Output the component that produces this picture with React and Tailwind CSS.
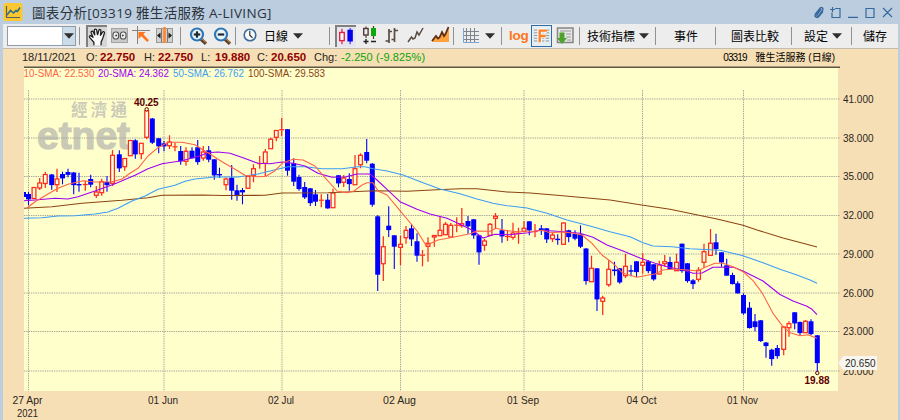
import React from "react";

const UP = true;
const DOWN = false;

// [x, high, bodyTop, bodyBottom, low, direction]
const CANDLES = [
  [28.5, 192, 194, 199, 205, DOWN],
  [34, 187, 187.5, 198.5, 199, UP],
  [39.7, 178, 183, 188, 190, UP],
  [45.3, 172, 174.5, 183.5, 188, UP],
  [51.7, 174, 174.5, 184.7, 189.7, DOWN],
  [57, 168.7, 179, 184.7, 192, UP],
  [62.5, 171.7, 174, 178, 184.3, DOWN],
  [68, 168.7, 172, 174.5, 177.3, DOWN],
  [73.7, 172, 172.5, 184.7, 194.3, DOWN],
  [79, 172.7, 184, 185, 191.7, DOWN],
  [85.3, 180.7, 184, 185, 190.7, UP],
  [90.7, 174.7, 179, 184.3, 187.3, DOWN],
  [96.3, 186, 192, 195.3, 198, UP],
  [101.7, 178.7, 181.7, 192.7, 195.7, UP],
  [107, 176, 182, 184.7, 191.7, DOWN],
  [112.5, 150, 155.3, 183.3, 186, UP],
  [119.3, 150.3, 154.3, 168, 172, DOWN],
  [124.7, 158.3, 158.5, 166.7, 170.7, UP],
  [130.3, 140, 140.5, 155.7, 156, UP],
  [135.3, 139.3, 140.3, 154, 158.7, DOWN],
  [141.3, 143, 143.3, 153.7, 159.3, UP],
  [146.7, 108.7, 110.7, 137.3, 139.3, UP],
  [152.3, 118, 118.5, 142.3, 144, DOWN],
  [158.7, 138, 138.3, 146, 153.3, DOWN],
  [164, 141, 143.3, 146, 151.3, DOWN],
  [169.5, 135.3, 142, 145.7, 149, UP],
  [175, 142.7, 146.3, 147.3, 151.3, UP],
  [180.7, 146, 151, 161, 164.7, DOWN],
  [186, 147.3, 151.3, 161.3, 165.7, UP],
  [192, 147.3, 150.7, 158, 158.3, DOWN],
  [197.7, 140, 147.3, 161.7, 164.7, DOWN],
  [203.3, 146, 152, 158, 160.7, UP],
  [208.7, 146, 150.3, 159.3, 162.3, DOWN],
  [214.3, 159, 159.3, 175, 179.7, DOWN],
  [219.5, 167.7, 174, 175, 178, DOWN],
  [226, 177.7, 179, 184.7, 190.3, UP],
  [231.7, 165, 177.7, 190.3, 199.7, DOWN],
  [237, 184.7, 190.3, 195.7, 200.7, DOWN],
  [242.5, 188, 190, 192, 204.3, DOWN],
  [248, 175.3, 176.3, 188.3, 188.5, UP],
  [253.5, 164.3, 168.7, 175.3, 182.3, UP],
  [259.7, 156, 163, 164, 168.7, UP],
  [265.3, 149, 152, 163.3, 176.3, UP],
  [270.7, 137.7, 139.3, 148.7, 149, UP],
  [276.3, 130, 130.5, 137.3, 141.3, UP],
  [281.7, 118, 129.2, 130.2, 136, UP],
  [287.5, 129, 129.2, 170.3, 175.7, DOWN],
  [293.7, 158.3, 163.3, 181.3, 186, DOWN],
  [299, 174.7, 177, 188.7, 190.7, DOWN],
  [304.7, 182, 187, 197, 199, DOWN],
  [310.3, 188, 188.3, 202.7, 206, DOWN],
  [315.5, 190, 194.3, 201.3, 206, DOWN],
  [321.3, 194.3, 199.7, 200.7, 207.3, UP],
  [327.7, 194, 199.7, 208, 208.7, DOWN],
  [333, 188.7, 193, 207.7, 208, UP],
  [338.5, 175, 175.3, 183, 187.3, DOWN],
  [343.7, 175, 178, 182.3, 187, UP],
  [349.3, 173.3, 179, 183.7, 190.7, DOWN],
  [355, 155, 168.7, 184.7, 185, UP],
  [360.5, 153.3, 155.3, 164.7, 168.3, UP],
  [366.7, 139, 152, 160.3, 163.3, DOWN],
  [372.3, 163, 163.7, 204.3, 206.7, DOWN],
  [377.7, 215.3, 216.3, 274.3, 291, DOWN],
  [383.3, 236.3, 246.7, 263.7, 281, UP],
  [388.7, 206.3, 225.7, 229.7, 237, DOWN],
  [394.3, 235, 235.3, 246.3, 269, DOWN],
  [400.5, 235.7, 244.3, 247.3, 265.3, UP],
  [406, 226, 230.3, 237.7, 243.7, UP],
  [411.5, 224, 228.3, 239, 246, DOWN],
  [417, 233.3, 241.3, 255.3, 261.7, DOWN],
  [422.5, 250, 254.7, 255.7, 266.3, UP],
  [428, 237.3, 243.3, 246.3, 261.7, UP],
  [434.3, 235, 235.5, 237, 246.7, UP],
  [440, 216.7, 230.3, 235.7, 236, UP],
  [445.5, 222, 224.3, 234.7, 235, UP],
  [450.7, 223, 225.3, 237, 237.3, UP],
  [456.7, 217.3, 224.7, 225.7, 232.3, UP],
  [461.8, 208, 223.7, 225.7, 227.7, UP],
  [468, 216, 221, 226, 233.7, DOWN],
  [473.7, 219, 219.3, 235, 238.7, DOWN],
  [479, 235, 235.3, 252, 264.7, DOWN],
  [484.5, 238.7, 241, 245.3, 250.7, UP],
  [490, 223, 224.3, 235.3, 235.5, UP],
  [495.5, 213, 216.3, 218.3, 229, UP],
  [502, 219, 230.3, 236, 242.7, DOWN],
  [507.5, 230, 236, 236.8, 241, UP],
  [513, 222.7, 233, 237.3, 239.7, UP],
  [518.5, 227.7, 232.7, 233.7, 243.7, UP],
  [524, 221, 228.3, 231.3, 232, UP],
  [529.3, 221, 221.3, 230, 235.3, DOWN],
  [535, 224, 231, 232, 237.3, UP],
  [541.3, 225, 228.3, 230.7, 235, DOWN],
  [546.7, 228, 228.3, 239, 243, DOWN],
  [552.5, 233, 235, 238.7, 242, UP],
  [557.7, 234.3, 238.7, 239.7, 244.7, DOWN],
  [563.5, 222.5, 223, 244.3, 244.5, UP],
  [568.7, 229.7, 230.3, 236.7, 242.3, DOWN],
  [575, 230.3, 234, 238.3, 240.3, DOWN],
  [580.5, 225.3, 234, 246.3, 248, DOWN],
  [586, 248, 248.5, 280.7, 284.7, DOWN],
  [591.5, 255.7, 268.3, 281.7, 282, UP],
  [597, 268, 268.3, 299, 311, DOWN],
  [602.7, 295.7, 298, 301.3, 315, UP],
  [608.7, 260.3, 269.3, 284.7, 286.7, UP],
  [614.5, 261.7, 269.5, 270.7, 275.7, DOWN],
  [619.7, 268, 268.3, 282, 283.7, DOWN],
  [625.5, 254, 266.3, 275.7, 278, UP],
  [631, 265, 270.2, 271.3, 276.3, DOWN],
  [636.5, 261, 261.3, 271.7, 277, DOWN],
  [642.7, 253.3, 262.3, 265.3, 273.7, UP],
  [648.3, 260, 261.3, 270.7, 273.3, DOWN],
  [653.7, 264, 264.3, 279, 280.7, DOWN],
  [659.3, 260.7, 265, 274, 274.3, UP],
  [664.7, 255, 261.7, 263.7, 266.7, UP],
  [670, 256.7, 262, 269, 269.3, DOWN],
  [676.5, 253.7, 262.3, 270.7, 271, UP],
  [682, 243.5, 243.7, 270.7, 272.7, DOWN],
  [687.5, 263, 263.3, 280.7, 282.7, DOWN],
  [693, 279, 280.3, 283.7, 289, DOWN],
  [698.5, 267.3, 270.3, 279.3, 281.7, UP],
  [704, 243.7, 251.7, 262.3, 267.7, UP],
  [710.5, 229, 243.3, 255.3, 256, UP],
  [716, 233.7, 242.3, 248.7, 254.7, DOWN],
  [721.5, 252, 252.3, 262, 266.7, DOWN],
  [726.7, 258.7, 265.3, 275.3, 275.5, DOWN],
  [732.5, 272.7, 275, 283.7, 284.5, DOWN],
  [737.7, 281.3, 283.3, 293, 293.5, DOWN],
  [743.5, 293.3, 295, 313, 314.7, DOWN],
  [749.5, 302, 307.7, 327.7, 328.5, DOWN],
  [755, 314, 321.3, 326.7, 331.3, DOWN],
  [760.7, 320, 320.3, 340.7, 342, DOWN],
  [766, 342, 342.5, 345.7, 357.7, DOWN],
  [771.7, 348.7, 349.7, 358.7, 365.7, DOWN],
  [777.3, 345, 348, 355.7, 358.7, DOWN],
  [783.7, 326, 327, 349.3, 355.3, UP],
  [789, 321.3, 323.7, 327.7, 336.7, UP],
  [794.7, 312, 312.3, 323, 329.3, DOWN],
  [800, 321.5, 322, 332.7, 335, DOWN],
  [805.5, 320, 321.3, 332.7, 333, UP],
  [811, 319.3, 321.3, 333.7, 335, DOWN],
  [817.3, 335, 335.3, 362.7, 372.7, DOWN],
];

const AVERAGES = [
  {
    label: "100-SMA: 29.583",
    x: 248,
    width: 77,
    color: "#8b4513",
    points:
      "24,208.3 52,206.7 82,203.3 122,200.3 148,197.7 162,195.3 203,195 222,195.5 265,195.3 282,193 328,192.7 375,190.7 407,191.3 437,189.7 460,188.7 477,188.7 507,192 530,193 560,195.5 610,200 640,204.7 670,209.3 717,219 743,225.3 757,230 783,238 803,243.3 817,247",
  },
  {
    label: "50-SMA: 26.762",
    x: 173,
    width: 71,
    color: "#3d9df5",
    points:
      "24,218.3 42,217.7 58,216 75,215.7 95,214 108,212 118,208.3 132,201 145,196 158,189.3 175,185.3 185,181.3 195,179 215,177 238,177 258,174 275,169.7 288,166.7 305,166.7 322,168.7 342,168.7 358,166.7 365,166.7 373,168.7 387,171 403,175 423,182.7 440,189 460,193.7 477,199 493,203.3 507,205.7 527,208 547,213.3 567,220 590,226 610,231.7 630,236.7 643,242.7 653,246 672,246.7 690,248.7 720,250.3 743,255.7 763,262.7 780,269.3 797,275 810,280 817,283.3",
  },
  {
    label: "20-SMA: 24.362",
    x: 98,
    width: 71,
    color: "#a000f0",
    points:
      "24,200.7 35,200 55,198.3 68,199 78,196.7 95,191 115,183.7 135,175.3 148,168.7 162,163.7 182,160.7 202,155.3 207,152.7 218,152 230,153.3 243,157.7 258,163.3 270,163.7 282,162 293,163.3 305,166 318,173.3 332,177.3 345,177 357,174 370,174 377,180 387,189.3 400,201.7 417,209.3 430,214 447,218.3 460,224.3 472,230 483,238 495,234.3 510,234.7 528,232.7 540,230.3 557,231.3 580,233.3 593,237.3 607,245 623,251 640,258 655,263.3 670,267.5 683,270 693,273.3 702,273 713,267.3 733,267 743,271 763,281 780,294.5 793,301 807,306.3 812,309.3 817,314.7",
  },
  {
    label: "10-SMA: 22.530",
    x: 23.5,
    width: 71,
    color: "#ff6347",
    points:
      "27,208 35,201.7 48,194 58,188.3 68,184.3 83,180.7 95,182 112,181.7 122,179 130,173.3 138,168.3 148,156 158,147.7 168,142.3 182,142.3 195,144.7 203,150 208,152.7 222,161.7 235,169.3 245,175.3 257,176.7 266,176.3 275,170.7 283,162.7 293,159.3 303,160 315,166 325,177.7 337,191 347,192.7 354,191 362,185 367,182.7 373,182.7 378,191 387,195 400,210.7 417,231 426,245.3 432,242.7 438,240 453,237.3 470,233.7 477,231 490,231.3 496,228.3 507,230.7 518,231.7 533,231.5 542,230.3 550,232.7 562,232 572,233 582,235 592,243.3 602,255 613,263.3 623,273.3 637,277.3 647,275.3 655,274 663,270 673,269 687,270 698,271 705,267.3 715,263.3 723,263.3 733,266.7 743,271.7 753,280.7 762,292.7 773,313.3 783,326.7 790,332.7 800,335.7 808,334.7 817,338.3",
  },
];

const PRICES = [
  ["41.000", 99],
  ["38.000", 138],
  ["35.000", 176.5],
  ["32.000", 215.5],
  ["29.000", 254],
  ["26.000", 293],
  ["23.000", 331.5],
  ["20.000", 371],
];

// [label, grid x, label width]
const DATES = [
  ["27 Apr", 28.5, 30],
  ["01 Jun", 164, 30],
  ["02 Jul", 282, 26],
  ["02 Aug", 400.5, 33],
  ["01 Sep", 524, 32],
  ["04 Oct", 642.5, 30],
  ["01 Nov", 743.5, 31],
];

const Candle = ({ data }) => {
  const [x, high, top, bottom, low, up] = data;
  const color = up ? "#ff2a1a" : "#0000ff";
  const height = Math.max(bottom - top, 1);

  if (up) {
    return (
      <g stroke={color} strokeWidth="1.25" fill="none">
        <path d={`M${x} ${high}V${top}M${x} ${bottom}V${low}`} />
        {height <= 1.2 ? (
          <path d={`M${x - 2.5} ${top + 0.5}h5`} />
        ) : (
          <rect x={x - 1.9} y={top} width="3.8" height={height} fill="#ffffe0" />
        )}
      </g>
    );
  }
  return (
    <g fill={color}>
      <path d={`M${x} ${high}V${low}`} stroke={color} strokeWidth="1.1" />
      <rect x={x - 2.5} y={top} width="5" height={height + 0.4} />
    </g>
  );
};

const PriceChart = () => (
  <svg
    viewBox="3 66 895 354"
    className="block h-[354px] w-[895px] shrink-0"
    fontFamily="'Liberation Sans', Arial, sans-serif"
  >
    <rect x="24" y="67" width="814" height="324" fill="#ffffcc" />
    <path d="M24 67.2H840" stroke="#5e5644" strokeWidth="1.4" />

    {/* Watermark */}
    <text
      x="71"
      y="115.8"
      fontSize="16.5"
      fontWeight="700"
      fill="#cbcbb8"
      textLength="56"
      fontFamily="'Noto Sans CJK TC', sans-serif"
    >
      經濟通
    </text>
    <text
      x="37"
      y="149.3"
      fontSize="39.5"
      fontWeight="700"
      fill="#c9c9b6"
      stroke="#c9c9b6"
      strokeWidth="1.2"
      textLength="93"
      lengthAdjust="spacingAndGlyphs"
    >
      etnet
    </text>

    {/* Grid */}
    <g stroke="#a8a89c" strokeWidth="1" strokeDasharray="1.4 0.9">
      {PRICES.map(([label, y]) => (
        <path key={label} d={`M24 ${y}H840`} />
      ))}
      {DATES.map(([label, x]) => (
        <path key={label} d={`M${x} 90V391`} />
      ))}
    </g>

    <rect x="24" y="192" width="2" height="5" fill="#0000ff" />
    {CANDLES.map((c) => (
      <Candle key={c[0]} data={c} />
    ))}

    {AVERAGES.map((a) => (
      <g key={a.label}>
        <polyline
          points={a.points}
          fill="none"
          stroke={a.color}
          strokeWidth="1.1"
          strokeLinejoin="round"
        />
        <text
          x={a.x}
          y="76.7"
          fontSize="10.5"
          fill={a.color}
          textLength={a.width}
          lengthAdjust="spacingAndGlyphs"
        >
          {a.label}
        </text>
      </g>
    ))}

    {/* High and low markers */}
    <g fill="#ffffcc" stroke="#6b0000" strokeWidth="1">
      <circle cx="146.7" cy="109.3" r="1.7" />
      <circle cx="817.3" cy="373" r="1.7" />
    </g>
    <g fontSize="10" fontWeight="700" fill="#5e0000" textAnchor="middle">
      <text x="146.3" y="106" textLength="24.5">
        40.25
      </text>
      <text x="817" y="383.5" textLength="25">
        19.88
      </text>
    </g>

    {/* Axis labels */}
    <g fontSize="11" fill="#2a2620">
      {PRICES.map(([label, y]) => (
        <text
          key={label}
          x="843"
          y={y + 3.7}
          textLength="30.5"
          lengthAdjust="spacingAndGlyphs"
        >
          {label}
        </text>
      ))}
      <path d="M838.5 363l4.5-7h34v14h-34z" fill="#f8f6f0" />
      <text x="845" y="367.3" textLength="30.5" lengthAdjust="spacingAndGlyphs">
        20.650
      </text>
      <g textAnchor="middle">
        {DATES.map(([label, x, width]) => (
          <text
            key={label}
            x={x - 1}
            y="404"
            textLength={width}
            lengthAdjust="spacingAndGlyphs"
          >
            {label}
          </text>
        ))}
        <text x="27.5" y="416.7" textLength="21" lengthAdjust="spacingAndGlyphs">
          2021
        </text>
      </g>
    </g>
  </svg>
);

const Caret = ({ className = "" }) => (
  <svg viewBox="0 0 10 6" className={`h-[6px] w-[10px] shrink-0 ${className}`}>
    <path d="M0 0.3h10L5 5.8z" fill="#2f2f2f" />
  </svg>
);

// Each toolbar group starts with its own divider line.
const Group = ({ className = "", children }) => (
  <div className={`flex h-full shrink-0 items-center ${className}`}>
    <div className="h-[18px] w-px shrink-0 bg-[#929292]" />
    {children}
  </div>
);

const Icon = ({ w, className = "", children }) => (
  <svg
    viewBox={`0 0 ${w} 22`}
    width={w}
    height="22"
    className={`shrink-0 ${className}`}
    fill="none"
  >
    {children}
  </svg>
);

const Magnifier = ({ plus, className }) => (
  <Icon w={19} className={className}>
    <path d="M11.8 14l5.2 4.8" stroke="#5d4027" strokeWidth="3.4" />
    <path d="M12.5 13.5l4.8 4.2" stroke="#d79a45" strokeWidth="1" />
    <circle cx="8" cy="9.5" r="6" fill="#eaf5fc" stroke="#2f78b4" strokeWidth="2.2" />
    <path d="M4.8 9.5h6.4" stroke="#1f2a30" strokeWidth="2.2" />
    {plus && <path d="M8 6.3v6.4" stroke="#1f2a30" strokeWidth="2.2" />}
  </Icon>
);

const Toolbar = () => (
  <div className="flex h-[25px] w-[895px] shrink-0 items-center border-b border-[#c4bcae] bg-[#ededed] text-[12px] text-black">
    <div className="flex h-full w-[76px] shrink-0 items-center pl-1">
      <div className="flex h-[20px] w-[69px] border border-[#8b9cad] bg-white">
        <div className="flex-1" />
        <div className="flex w-[13px] items-center justify-center border-l border-[#a9bccd] bg-[#cbdbe8]">
          <Caret />
        </div>
      </div>
    </div>

    <Group className="w-[101px]">
      {/* Hand, pressed */}
      <Icon w={21} className="ml-1.5 border-l-2 border-t-2 border-[#808080] bg-[#d6d6d6]">
        <path
          d="M6.5 20v-3.2L2 11.6C.8 9.8 2.7 8.9 4 10.2l1.8 1.5-2.3-5.4C2.9 4.6 5 4 5.8 5.5L7.5 9 7 3.6C7 1.9 9.3 1.8 9.6 3.5l.9 5.3L12 3.7c.5-1.6 2.5-1.2 2.3.6L13.7 9.5 16 5.7c1-1.3 2.7-.3 2.1 1.2-1.2 3.2-1.5 6.6-3.6 9.4V20"
          fill="#fafafa"
          stroke="#1d1d1d"
          strokeWidth="1.4"
        />
      </Icon>
      <Icon w={17} className="ml-1">
        <rect x="0.5" y="3.5" width="16" height="14" fill="#c9c9c9" stroke="#a2a2a2" />
        <rect x="2" y="7" width="5.6" height="7" rx="2.5" fill="#f2f2f2" stroke="#555" strokeWidth="1.2" />
        <rect x="9.4" y="7" width="5.6" height="7" rx="2.5" fill="#f2f2f2" stroke="#555" strokeWidth="1.2" />
        <circle cx="5.2" cy="10.5" r="1" fill="#444" />
        <circle cx="11.8" cy="10.5" r="1" fill="#444" />
      </Icon>
      <Icon w={19} className="ml-1">
        <path d="M0 5.5h18M5.5 1v18" stroke="#8a8177" />
        <path d="M6.5 7h7l-2.2 2.3 5.7 6-1.8 1.7-5.8-5.8-2.9 2.8z" fill="#ff7418" />
      </Icon>
      <Icon w={17} className="ml-[5px]">
        <rect x="0.5" y="3.5" width="16" height="14" fill="#d1d1d1" stroke="#999" />
        <path d="M8.5 2v16" stroke="#ff8a30" strokeWidth="2.8" />
        <path d="M5.5 4v13M11.5 4v13" stroke="#777" />
        <path d="M1 10.5l3.5-3v6zM16 10.5l-3.5-3v6z" fill="#1c1c1c" />
      </Icon>
    </Group>

    <Group className="w-[55px]">
      <Magnifier plus className="ml-2" />
      <Magnifier className="ml-[5px]" />
    </Group>

    <Group className="w-[94px]">
      <Icon w={14} className="ml-[7px]">
        <circle cx="7" cy="10" r="5.8" fill="#f6fafd" stroke="#3b6a9b" strokeWidth="1.6" />
        <path d="M6.8 5.8v4.5l2.7 2.5" stroke="#333" strokeWidth="1.2" />
      </Icon>
      <span className="ml-[7px]">日線</span>
      <Caret className="ml-[5px]" />
    </Group>

    <Group className="w-[124px]">
      {/* Candlestick, pressed */}
      <Icon w={21} className="ml-[5px] border-l-2 border-t-2 border-[#808080] bg-[#e6e6f0]">
        <path d="M5.5 2v4M5.5 15v4" stroke="#e8193c" strokeWidth="1.3" />
        <rect x="3" y="6" width="5" height="9" fill="#fff" stroke="#e8193c" strokeWidth="1.5" />
        <path d="M14.5 1v18" stroke="#0000ee" />
        <rect x="11.5" y="3" width="6" height="13" fill="#0000ee" />
      </Icon>
      <Icon w={16} className="ml-[6px]">
        <path d="M4 1.5v2M4 10v3M11.5 1v13" stroke="#543b36" strokeWidth="1.2" />
        <rect x="1.7" y="3.5" width="4.4" height="6.5" fill="#eee" stroke="#543b36" strokeWidth="1.4" />
        <rect x="9" y="3" width="5" height="8" fill="#0ba80b" />
        <path d="M1.5 16.5h5M4 14v5M9 16.5h5" stroke="#222" strokeWidth="1.4" />
      </Icon>
      <Icon w={14} className="ml-[7px]">
        <path d="M4 4v14M9.5 3v14M0.5 16H4M4 6.5h3M6.5 14.5h3M9.5 5.5h3.5" stroke="#5a4a44" strokeWidth="1.7" />
      </Icon>
      <Icon w={17} className="ml-[8px]">
        <path d="M1 17l3.5-5 1.5 2 2-1 2-6 2 3L16 3" stroke="#5a4a44" strokeWidth="1.5" />
      </Icon>
      <Icon w={19} className="ml-[7px]">
        <path d="M1 17l4-5 2 2 4-6 2 3.5L18 3v14z" fill="#ffa23c" />
        <path d="M1 16l4-5 2 2.5 1.5-1L11 7l2 4 1.5-2L17.5 2" stroke="#5d2c12" strokeWidth="1.8" />
      </Icon>
    </Group>

    <Group className="w-[48px]">
      <Icon w={16} className="ml-[9px]">
        <path d="M3.5 3v15M7.5 3v15M11.5 3v15M0 6.5h16M0 10.5h16M0 14.5h16" stroke="#7f858f" />
        <path d="M0.5 3v14.5H16" stroke="#7ba4cf" />
      </Icon>
      <Caret className="ml-[6px]" />
    </Group>

    <Group className="w-[78px]">
      <span className="ml-[7px] w-[20px] font-['Liberation_Sans'] text-[13.5px] font-bold tracking-[-0.3px] text-[#ff7518]">
        log
      </span>
      <Icon w={21} className="ml-[2px] border border-[#2d6ca5] bg-[#e5eef5]">
        <path d="M2 4.5h17M2 7.5h17M2 10.5h17M2 13.5h17M2 16.5h17" stroke="#8a8e90" strokeDasharray="5 1.5" />
        <path d="M8.5 18V5h8M8.5 11h6.5" stroke="#f8fbfc" strokeWidth="5" />
        <path d="M8.5 18V5h8M8.5 11h6.5" stroke="#ff8024" strokeWidth="2.6" />
      </Icon>
      <Icon w={18} className="ml-[4px]">
        <path d="M1.5 3H17v14.5H1.5z" fill="#e7e7e7" stroke="#858585" strokeWidth="1.5" />
        <path d="M4 6h11M10 9h5M10 12h5M11 15h4" stroke="#989898" />
        <path d="M3.5 7.5h5V13H11l-5 6-5-6h2.5z" fill="#4da22c" />
      </Icon>
    </Group>

    <Group className="w-[76px]">
      <span className="ml-[7px]">技術指標</span>
      <Caret className="ml-[4px]" />
    </Group>
    <Group className="w-[60px]">
      <span className="ml-[18px]">事件</span>
    </Group>
    <Group className="w-[76px]">
      <span className="ml-[15px]">圖表比較</span>
    </Group>
    <Group className="w-[60px]">
      <span className="ml-[12px]">設定</span>
      <Caret className="ml-[4px]" />
    </Group>
    <Group className="w-[47px]">
      <span className="ml-[11px]">儲存</span>
    </Group>
  </div>
);

const TitleBar = () => (
  <div className="flex h-[24px] w-[895px] shrink-0 items-center">
    <svg viewBox="0 0 20 20" className="h-[20px] w-[20px]" fill="none">
      <rect x="0.5" y="1" width="19" height="18" rx="2" fill="#fcc832" />
      <path d="M3.5 4v11.5H17" stroke="#51635c" strokeWidth="1.2" />
      <path d="M4 13l3.5-4.5 3 2.5 2.5-2.5 1.5 1L17 5.5" stroke="#326f87" strokeWidth="1.6" />
    </svg>
    <h1 className="ml-[9px] mt-[4px] w-[250px] whitespace-nowrap font-['Open_Sans','Noto_Sans_CJK_TC',sans-serif] text-[13.5px] leading-none tracking-[0.32px] text-[#2b333c]">
      圖表分析[03319 雅生活服務 A-LIVING]
    </h1>
    <svg
      viewBox="0 0 82 16"
      className="ml-auto mr-1 h-[16px] w-[82px]"
      fill="none"
      stroke="#35699c"
      strokeWidth="1.2"
    >
      <path
        d="M9 5l-4 5.5c-.8 1.2.8 2.2 1.6 1.2l4-5.5c1.3-2-1.3-3.6-2.7-1.8L3.500 10c-1.5 2.6 1.5 4.6 3.5 2.4l4-5"
        strokeWidth="1.4"
      />
      <path d="M23 4.5h5v9h-8v-5M18 5.5h5M20.5 3v5" />
      <path d="M36 13.4h10M54 4.500h8v9h-8zM71 4l9 9M80 4l-9 9" />
    </svg>
  </div>
);

const Quote = ({ name, value, className }) => (
  <div className={`flex items-baseline whitespace-nowrap ${className}`}>
    <span className="w-[14px]">{name}:</span>
    <b className="text-[11.5px] text-[#900000]">{value}</b>
  </div>
);

const InfoBar = () => (
  <div className="flex h-[17px] w-[895px] shrink-0 items-center pl-[19px] font-['Liberation_Sans'] text-[11px] text-[#262626]">
    <span className="w-[64px]">18/11/2021</span>
    <Quote name="O" value="22.750" className="w-[58px]" />
    <Quote name="H" value="22.750" className="w-[57px]" />
    <Quote name="L" value="19.880" className="w-[56px]" />
    <Quote name="C" value="20.650" className="w-[57px]" />
    <span className="w-[27px]">Chg:</span>
    <span className="whitespace-nowrap tracking-[0.1px] text-[#0aa40a]">-2.250 (-9.825%)</span>
    <div className="ml-auto mr-[63px] flex items-center font-['Liberation_Sans','Noto_Sans_CJK_TC',sans-serif] text-[10px] text-black">
      <span className="mr-[9px] tracking-[-0.9px]">03319</span>
      <span>雅生活服務 (日線)</span>
    </div>
  </div>
);

export default function App() {
  return (
    <div className="flex h-[420px] w-[900px] flex-col overflow-hidden border-l-[3px] border-r-2 border-[#bccddf] bg-[#bccddf] font-['Noto_Sans_CJK_TC',sans-serif]">
      <TitleBar />
      <Toolbar />
      <div className="flex flex-col bg-[#f7dfb5]">
        <InfoBar />
        <PriceChart />
      </div>
    </div>
  );
}
